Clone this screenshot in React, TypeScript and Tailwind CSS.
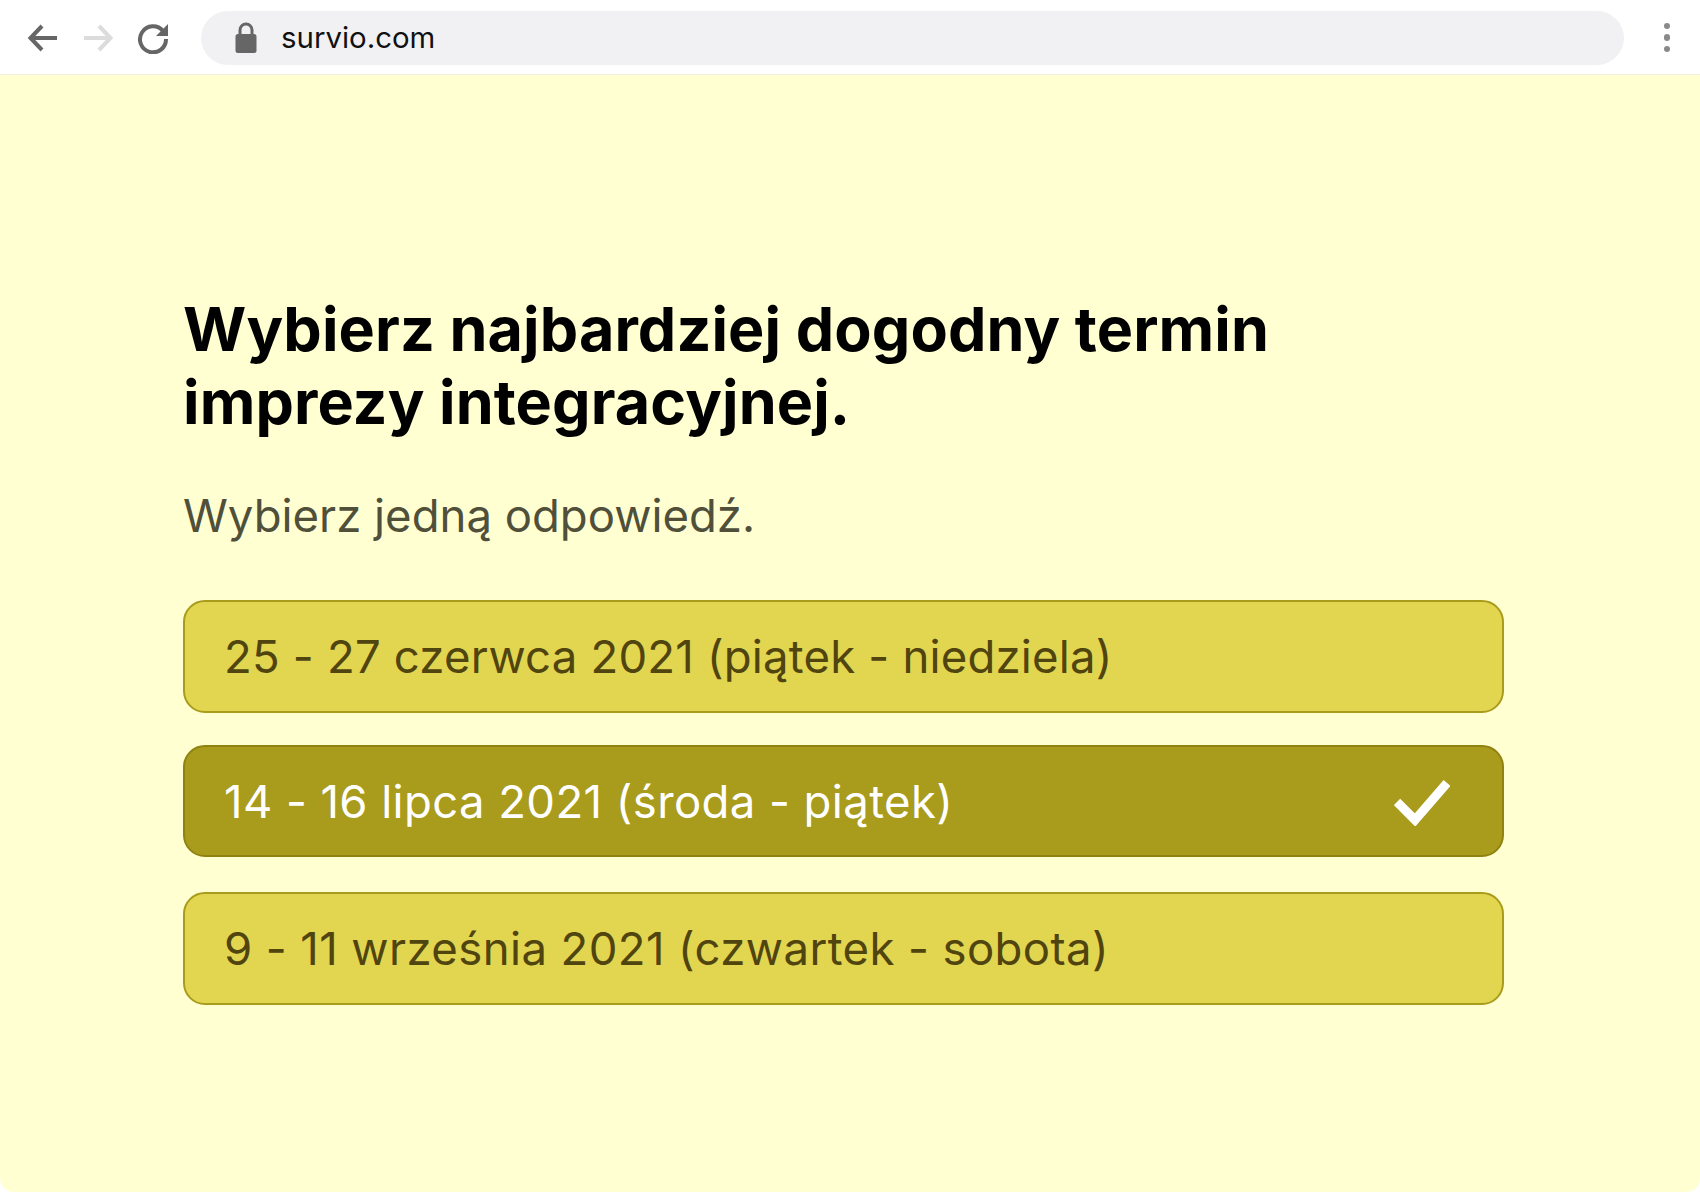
import React from "react";

const font = { fontFamily: "Inter, sans-serif" };

function Option({ label, selected, className }: { label: string; selected?: boolean; className?: string }) {
  return (
    <div
      className={
        "flex items-center justify-between rounded-[22px] border-2 pl-[39px] pr-[52px] pt-[2px] text-[45.5px] " +
        (selected
          ? "border-[#8f8210] bg-[#a99b1c] text-white "
          : "border-[#a99b1c] bg-[#e2d550] text-[#50440f] ") +
        (className ?? "")
      }
    >
      <span className="whitespace-nowrap">{label}</span>
      {selected && (
        <svg width="56" height="48" viewBox="0 0 56 48" fill="none">
          <path d="M3 24L21 42L53 5" stroke="#fff" strokeWidth="9" />
        </svg>
      )}
    </div>
  );
}

export default function App() {
  return (
    <div className="flex h-[1192px] w-[1700px] flex-col overflow-hidden bg-white" style={font}>
      <header className="flex h-[75px] shrink-0 items-center border-b border-[#eef0dc] bg-white pl-[27px] pr-[30px] pt-[1px]">
        <svg width="32" height="32" viewBox="0 0 32 32" fill="none" className="mr-[23px]">
          <path d="M30 16H4M15 4L3.5 16L15 28" stroke="#666" strokeWidth="4" />
        </svg>
        <svg width="32" height="32" viewBox="0 0 32 32" fill="none" className="mr-[23px]">
          <path d="M2 16H28M17 4L28.5 16L17 28" stroke="#dcdcdc" strokeWidth="4" />
        </svg>
        <svg width="32" height="32" viewBox="0 0 32 32" fill="none" className="mr-[32px]">
          <path d="M26 9A13 13 0 1 0 29 17" stroke="#666" strokeWidth="4" />
          <path d="M31 2V14H19Z" fill="#666" />
        </svg>
        <div className="flex h-[54px] flex-1 items-center rounded-full bg-[#f1f1f3] pl-[34px]">
          <svg width="22" height="31" viewBox="0 0 22 31" fill="none">
            <path d="M5 13V8A6 6 0 0 1 17 8V13" stroke="#666" strokeWidth="3" />
            <rect x="0.5" y="12" width="21" height="19" rx="2.5" fill="#666" />
          </svg>
          <span className="ml-[24px] pt-[1px] text-[29.4px] text-[#111]">survio.com</span>
        </div>
        <div className="ml-[40px] flex flex-col gap-[5px]">
          <span className="h-[6.5px] w-[6.5px] rounded-full bg-[#8a8a8a]" />
          <span className="h-[6.5px] w-[6.5px] rounded-full bg-[#8a8a8a]" />
          <span className="h-[6.5px] w-[6.5px] rounded-full bg-[#8a8a8a]" />
        </div>
      </header>
      <main className="flex-1 rounded-b-[14px] bg-[#ffffd2] pl-[183px] pr-[196px] pt-[218px]">
        <h1 className="text-[61px] font-bold leading-[73px] tracking-[0.1px] text-black">
          Wybierz najbardziej dogodny termin
          <br />
          imprezy integracyjnej.
        </h1>
        <p className="mt-[49px] text-[45.5px] leading-[56px] text-[#50503a]">Wybierz jedną odpowiedź.</p>
        <div className="mt-[56px] flex flex-col">
          <Option label="25 - 27 czerwca 2021 (piątek - niedziela)" className="h-[113px] tracking-[0.2px]" />
          <Option label="14 - 16 lipca 2021 (środa - piątek)" selected className="mt-[32px] h-[112px] tracking-[0.4px]" />
          <Option label="9 - 11 września 2021 (czwartek - sobota)" className="mt-[35px] h-[113px] tracking-[0.4px]" />
        </div>
      </main>
    </div>
  );
}
